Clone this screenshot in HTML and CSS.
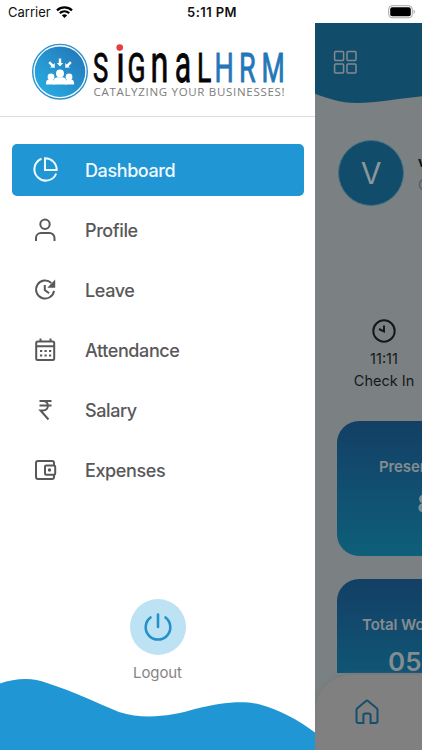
FILE: index.html
```html
<!DOCTYPE html>
<html lang="en">
<head>
  <meta charset="UTF-8">
  <meta name="viewport" content="width=device-width, initial-scale=1.0">
  <title>SignalHRM</title>
  <link rel="stylesheet" href="styles.css">
</head>
<body>
  <div class="phone">
    <header class="status">
      <div class="carrier">
        <span>Carrier</span>
        <svg width="17" height="12" viewBox="0 0 17 12" fill="none" stroke="#000" stroke-width="2.3">
          <path d="M1 4.3 C5.2 .3 11.8 .3 16 4.3"/>
          <path d="M3.8 7.2 C6.6 4.7 10.4 4.7 13.2 7.2"/>
          <path d="M8.5 12 L5.8 9.3 C7.3 8 9.7 8 11.2 9.3 Z" fill="#000" stroke="none"/>
        </svg>
      </div>
      <span class="time">5:11 PM</span>
      <div class="battery">
        <svg width="28" height="14" viewBox="0 0 28 14">
          <rect x=".7" y=".7" width="23.6" height="12.1" rx="3.5" fill="#fff" stroke="#a5a5a5"/>
          <rect x="2.2" y="2.3" width="20.6" height="8.9" rx="2" fill="#000"/>
          <path d="M25.6 4.8 C27.3 5.6 27.3 8 25.6 8.8 Z" fill="#a5a5a5"/>
        </svg>
      </div>
    </header>

    <div class="screen">
      <aside class="drawer">
        <div class="brand">
          <svg width="315" height="93" viewBox="0 23 315 93">
            <defs>
              <linearGradient id="badge" x1="1" y1="0" x2="0" y2="1">
                <stop offset="0" stop-color="#2472b5"/>
                <stop offset="1" stop-color="#28b2e6"/>
              </linearGradient>
            </defs>
            <circle cx="60" cy="71.7" r="27.3" fill="#fff" stroke="#2b91c9" stroke-width="1.4"/>
            <circle cx="60" cy="71.7" r="25.3" fill="url(#badge)"/>
            <g fill="#fff">
              <circle cx="51" cy="77" r="3.4"/>
              <circle cx="69" cy="77" r="3.4"/>
              <path d="M46 84.5 v-2.3 q.5-3 4-3 h2 l3 2 v3.3z M74 84.5 v-2.3 q-.5-3-4-3 h-2 l-3 2 v3.3z"/>
              <path d="M53.5 84.5 v-3.6 q.5-3.4 4.5-3.7 h4 q4 .3 4.5 3.7 v3.6z"/>
              <circle cx="60" cy="73.5" r="4"/>
              <path d="M58.8 58.5 h2.4 v4.5 h2 l-3.2 3.5 l-3.2-3.5 h2z"/>
              <path d="M58.8 58.5 h2.4 v4.5 h2 l-3.2 3.5 l-3.2-3.5 h2z" transform="translate(-8 2.5) rotate(-45 60 62.5)"/>
              <path d="M58.8 58.5 h2.4 v4.5 h2 l-3.2 3.5 l-3.2-3.5 h2z" transform="translate(8 2.5) rotate(45 60 62.5)"/>
            </g>
            <g class="word">
              <text transform="translate(92.9 82) scale(.64 1)" font-size="40">S</text>
              <text transform="translate(116.2 82.3) scale(.65 1)" font-size="54">ı</text>
              <text transform="translate(127.6 82) scale(.66 1)" font-size="40">G</text>
              <text transform="translate(150.6 82.3) scale(.6 1)" font-size="54">n</text>
              <text transform="translate(174.8 82) scale(.57 1)" font-size="53">a</text>
              <text transform="translate(196.9 82.3) scale(.65 1)" font-size="41">L</text>
            </g>
            <g class="word blue">
              <text transform="translate(214.4 82.3) scale(.66 1)" font-size="41">H</text>
              <text transform="translate(238.9 82.3) scale(.66 1)" font-size="41">R</text>
              <text transform="translate(261.5 82.3) scale(.65 1)" font-size="41">M</text>
            </g>
            <circle cx="119.7" cy="47.6" r="3.3" fill="#e43e40"/>
            <text class="tagline" x="93.5" y="95.5" textLength="191">CATALYZING YOUR BUSINESSES!</text>
          </svg>
        </div>

        <nav class="menu">
          <a class="item active">
            <svg width="28" height="28" viewBox="0 0 28 28">
              <path d="M10.5 2.8 A11.3 11.3 0 1 0 25.2 17.5"/>
              <path d="M14 2.3 A11.5 11.5 0 0 1 25.7 14 H14z"/>
            </svg>
            <span>Dashboard</span>
          </a>
          <a class="item">
            <svg width="28" height="28" viewBox="0 0 28 28">
              <circle cx="14" cy="8.3" r="4.7"/>
              <path d="M5 25 v-3 a5 5 0 0 1 5-5 h8.5 a5 5 0 0 1 5 5 v3"/>
            </svg>
            <span>Profile</span>
          </a>
          <a class="item">
            <svg width="28" height="28" viewBox="0 0 28 28">
              <path d="M20.3 7 A9 9 0 1 0 23 14.8"/>
              <path d="M13.8 9 v5 l4.3 3.3"/>
              <path class="solid" d="M24.2 3.6 V11.8 H16.3z"/>
            </svg>
            <span>Leave</span>
          </a>
          <a class="item">
            <svg width="28" height="28" viewBox="0 0 28 28">
              <rect x="5.2" y="5.4" width="18" height="18.6" rx="1.5"/>
              <path d="M9.5 2.5 V5 M19.5 2.5 V5 M5.2 10.2 H23.2"/>
              <path d="M9 15 h2.2 M13.5 15 h2.2 M18 15 h2.2 M9 19.5 h2.2 M13.5 19.5 h2.2 M18 19.5 h2.2"/>
            </svg>
            <span>Attendance</span>
          </a>
          <a class="item">
            <svg width="28" height="28" viewBox="0 0 28 28">
              <path d="M8.500 5 H20.500 M8.500 9.600 H20.500 M9 5 H12 C18.500 5 18.500 14.500 12 14.500 H9.500 L17.500 23.500"/>
            </svg>
            <span>Salary</span>
          </a>
          <a class="item">
            <svg width="28" height="28" viewBox="0 0 28 28">
              <path d="M23 9.5 V7 a2 2 0 0 0-2-2 H7 a2 2 0 0 0-2 2 V21 a2 2 0 0 0 2 2 H21 a2 2 0 0 0 2-2 V18.7"/>
              <rect x="14" y="9.5" width="10.2" height="9.2" rx="1.2"/>
              <circle class="solid" cx="18.5" cy="14" r="1.7"/>
            </svg>
            <span>Expenses</span>
          </a>
        </nav>

        <div class="logout">
          <div class="power">
            <svg width="30" height="30" viewBox="0 0 30 30">
              <path d="M7.5 5.5 A12.3 12.3 0 1 0 22.5 5.5 M15 2.5 V15"/>
            </svg>
          </div>
          <span>Logout</span>
        </div>

        <svg class="wave" width="315" height="72" viewBox="0 0 315 72">
          <path d="M0 5.5 C15 .5 32 -1 47 5 C75 14 97 25 119 34 C144 42 172 38 195 31 C220 25 242 22 260 26.5 C277 31 299 42 315 54.5 V72 H0z" fill="#2196d4"/>
        </svg>
      </aside>

      <main class="dashboard">
        <div class="content">
          <div class="topbar">
            <svg width="107" height="81" viewBox="0 0 107 81">
              <path d="M0 0 H107 V73.3 C85 75.5 60 80 42 80 C25 80 12 75 0 70.7z" fill="#124c6b"/>
              <g fill="none" stroke="#838b90" stroke-width="1.5">
                <rect x="19.6" y="28.6" width="9" height="9" rx="1"/>
                <rect x="32" y="28.6" width="9" height="9" rx="1"/>
                <rect x="19.6" y="40.9" width="9" height="9" rx="1"/>
                <rect x="32" y="40.9" width="9" height="9" rx="1"/>
              </g>
            </svg>
          </div>
          <div class="person">
            <div class="avatar">V</div>
            <div class="who">
              <strong>vijay</strong>
              <span>CEO</span>
            </div>
          </div>
          <div class="checkin">
            <svg width="26" height="26" viewBox="0 0 26 26">
              <circle cx="13" cy="13" r="10.7"/>
              <path d="M8 11 L13 13.5 V7.5"/>
            </svg>
            <span>11:11</span>
            <span>Check In</span>
          </div>
          <section class="card">
            <h3>Present</h3>
            <p>8</p>
          </section>
          <section class="card work">
            <h3>Total Work</h3>
            <p>05</p>
          </section>
        </div>
        <footer class="tabs">
          <svg width="26" height="28" viewBox="0 0 26 28">
            <path d="M2.5 12 Q2.5 11 3.3 10.3 L12 3 Q13 2.2 14 3 L22.7 10.3 Q23.5 11 23.5 12 V23 Q23.5 25 21.5 25 H16.6 V17.5 Q16.6 15.5 14.8 15.5 H11.2 Q9.4 15.5 9.4 17.5 V25 H4.5 Q2.5 25 2.5 23z"/>
          </svg>
        </footer>
      </main>
    </div>
  </div>
</body>
</html>
```

FILE: styles.css
```css
* {
    box-sizing: border-box;
}

body {
    margin: 0;
    font-family: Inter, "Liberation Sans", sans-serif;
}

svg {
    display: block;
    flex-shrink: 0;
}

.phone {
    display: flex;
    flex-direction: column;
    width: 422px;
    height: 750px;
    overflow: hidden;
    background: #fff;
}

.status {
    display: grid;
    grid-template-columns: 1fr auto 1fr;
    align-items: center;
    height: 23px;
    padding: 1px 6px 0 8px;
    font-size: 13px;
    color: #111;
}

.carrier {
    display: flex;
    align-items: center;
    gap: 5px;
}

.time {
    font-weight: 600;
    letter-spacing: .4px;
}

.battery {
    justify-self: end;
}

.screen {
    display: flex;
    flex: 1;
    min-height: 0;
}

/* drawer */
.drawer {
    display: flex;
    flex-direction: column;
    width: 315px;
}

.brand {
    height: 94px;
    border-bottom: 1px solid #dedede;
}

.word {
    font-family: Roboto, sans-serif;
    fill: #050505;
    stroke: #050505;
    stroke-width: .9;
    stroke-linejoin: round;
}

.blue {
    fill: #2377b8;
    stroke: #2377b8;
}

.tagline {
    font-family: "Open Sans", sans-serif;
    font-size: 11.5px;
    fill: #7c7c7c;
}

.menu {
    display: flex;
    flex-direction: column;
    gap: 8px;
    padding: 27px 11px 0 12px;
}

.item {
    display: flex;
    align-items: center;
    gap: 26px;
    height: 52px;
    padding-left: 19px;
    border-radius: 5px;
    font-size: 18px;
    font-weight: 500;
    letter-spacing: -.4px;
    color: #58585a;
}

.item svg {
    fill: none;
    stroke: currentColor;
    stroke-width: 2;
}

.item .solid {
    fill: currentColor;
    stroke: none;
}

.item.active {
    background: #2196d4;
    color: #f0faff;
}

.logout {
    display: flex;
    flex-direction: column;
    align-items: center;
    gap: 9px;
    margin-top: 103px;
    font-size: 15px;
    line-height: 18px;
    letter-spacing: -.1px;
    color: #858585;
}

.power {
    display: grid;
    place-items: center;
    width: 56px;
    height: 56px;
    border-radius: 50%;
    background: #bce2f4;
}

.power svg {
    fill: none;
    stroke: #2391ca;
    stroke-width: 2.6;
    stroke-linecap: round;
}

.wave {
    margin-top: -4px;
}

/* dimmed page beside the drawer */
.dashboard {
    display: flex;
    flex-direction: column;
    width: 107px;
    overflow: hidden;
    background: #7b8182;
}

.content {
    flex: 1;
    min-height: 0;
    overflow: hidden;
}

.person {
    display: flex;
    align-items: center;
    gap: 14px;
    padding: 36px 0 0 23px;
}

.avatar {
    display: grid;
    flex-shrink: 0;
    place-items: center;
    width: 66px;
    height: 66px;
    border: 1px solid #417087;
    border-radius: 50%;
    background: #124c6b;
    font-size: 30px;
    color: #8b969b;
}

.who {
    display: flex;
    flex-direction: column;
    gap: 6px;
    font-size: 14px;
    color: #555a5b;
}

.who strong {
    color: #111;
}

.checkin {
    display: flex;
    flex-direction: column;
    align-items: center;
    width: 76px;
    margin: 112px 0 0 31px;
    font-size: 14.5px;
    line-height: 22px;
    color: #151819;
}

.checkin svg {
    margin-bottom: 4px;
    fill: none;
    stroke: #151819;
    stroke-width: 2;
}

.card {
    width: 170px;
    height: 135px;
    margin: 29px 0 0 22px;
    padding: 37px 0 0 42px;
    border-radius: 22px;
    background: linear-gradient(#133f65, #0e5f7a);
    color: #858c91;
}

.card h3 {
    margin: 0;
    font-size: 15px;
    font-weight: 600;
    line-height: 18px;
    letter-spacing: -.1px;
}

.card p {
    margin: 12px 0 0 38px;
    font-size: 26px;
    font-weight: 600;
    line-height: 32px;
}

.card.work {
    margin-top: 23px;
    padding-left: 25px;
}

.card.work p {
    margin-left: 26px;
}

.tabs {
    height: 75px;
    margin-top: 2px;
    padding: 23px 0 0 39px;
    border-radius: 36px 0 0 0;
    background: #808080;
    box-shadow: 0 0 4px #6d7679;
}

.tabs svg {
    fill: none;
    stroke: #174e6b;
    stroke-width: 2;
}
```
